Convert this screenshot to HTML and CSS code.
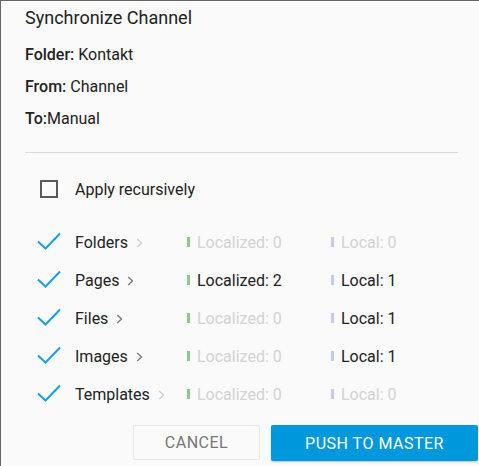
FILE: index.html
```html
<!DOCTYPE html>
<html>
<head>
<meta charset="utf-8">
<link rel="stylesheet" href="styles.css">
</head>
<body>
<div class="dialog">
  <h1 class="title">Synchronize Channel</h1>
  <div class="info"><b>Folder:</b> Kontakt</div>
  <div class="info"><b>From:</b> Channel</div>
  <div class="info"><b>To:</b>Manual</div>
  <hr class="divider">
  <div class="recursive">
    <span class="box"></span>
    <span class="rec-label">Apply recursively</span>
  </div>
  <div class="rows">
    <div class="row">
      <span class="check"><svg width="24" height="20" viewBox="0 0 24 20"><path d="M1 10.5 L8.5 17.5 L23 2.5" fill="none" stroke="#1b9fe2" stroke-width="2"/></svg></span>
      <span class="name">Folders<svg class="chev dim" width="7" height="10" viewBox="0 0 7 10"><path d="M1.2 1 L5.5 5 L1.2 9" fill="none" stroke-width="1.4"/></svg></span>
      <span class="stat"><i class="bar green"></i><span class="dimtext">Localized: 0</span></span>
      <span class="stat"><i class="bar lav"></i><span class="dimtext">Local: 0</span></span>
    </div>
    <div class="row">
      <span class="check"><svg width="24" height="20" viewBox="0 0 24 20"><path d="M1 10.5 L8.5 17.5 L23 2.5" fill="none" stroke="#1b9fe2" stroke-width="2"/></svg></span>
      <span class="name">Pages<svg class="chev" width="7" height="10" viewBox="0 0 7 10"><path d="M1.2 1 L5.5 5 L1.2 9" fill="none" stroke-width="1.4"/></svg></span>
      <span class="stat"><i class="bar green"></i><span>Localized: 2</span></span>
      <span class="stat"><i class="bar lav"></i><span>Local: 1</span></span>
    </div>
    <div class="row">
      <span class="check"><svg width="24" height="20" viewBox="0 0 24 20"><path d="M1 10.5 L8.5 17.5 L23 2.5" fill="none" stroke="#1b9fe2" stroke-width="2"/></svg></span>
      <span class="name">Files<svg class="chev" width="7" height="10" viewBox="0 0 7 10"><path d="M1.2 1 L5.5 5 L1.2 9" fill="none" stroke-width="1.4"/></svg></span>
      <span class="stat"><i class="bar green"></i><span class="dimtext">Localized: 0</span></span>
      <span class="stat"><i class="bar lav"></i><span>Local: 1</span></span>
    </div>
    <div class="row">
      <span class="check"><svg width="24" height="20" viewBox="0 0 24 20"><path d="M1 10.5 L8.5 17.5 L23 2.5" fill="none" stroke="#1b9fe2" stroke-width="2"/></svg></span>
      <span class="name">Images<svg class="chev" width="7" height="10" viewBox="0 0 7 10"><path d="M1.2 1 L5.5 5 L1.2 9" fill="none" stroke-width="1.4"/></svg></span>
      <span class="stat"><i class="bar green"></i><span class="dimtext">Localized: 0</span></span>
      <span class="stat"><i class="bar lav"></i><span>Local: 1</span></span>
    </div>
    <div class="row">
      <span class="check"><svg width="24" height="20" viewBox="0 0 24 20"><path d="M1 10.5 L8.5 17.5 L23 2.5" fill="none" stroke="#1b9fe2" stroke-width="2"/></svg></span>
      <span class="name">Templates<svg class="chev dim" width="7" height="10" viewBox="0 0 7 10"><path d="M1.2 1 L5.5 5 L1.2 9" fill="none" stroke-width="1.4"/></svg></span>
      <span class="stat"><i class="bar green"></i><span class="dimtext">Localized: 0</span></span>
      <span class="stat"><i class="bar lav"></i><span class="dimtext">Local: 0</span></span>
    </div>
  </div>
  <div class="actions">
    <button class="btn cancel">CANCEL</button>
    <button class="btn push">PUSH TO MASTER</button>
  </div>
</div>
</body>
</html>
```
FILE: styles.css
```css
html, body {
  margin: 0;
  padding: 0;
  background: #666;
  height: 466px;
  overflow: hidden;
}
body {
  padding: 1px 0 0 1px;
  box-sizing: border-box;
  font-family: Roboto, "Noto Sans", sans-serif;
  color: #222;
}
.dialog {
  background: #fafafa;
  height: 465px;
  padding: 0 0 0 24px;
  box-sizing: border-box;
  overflow: hidden;
}
.title {
  margin: 0;
  padding-top: 5px;
  font-size: 18px;
  font-weight: 400;
  line-height: 24px;
  color: #222;
}
.info {
  font-size: 16px;
  line-height: 20px;
  margin-top: 15px;
}
.info + .info {
  margin-top: 12px;
}
.info b {
  font-weight: 500;
}
.divider {
  border: 0;
  border-top: 1px solid #dcdcdc;
  margin: 23px 21px 0 0;
}
.recursive {
  display: flex;
  align-items: center;
  height: 20px;
  margin-top: 26px;
  font-size: 16px;
}
.box {
  width: 14px;
  height: 14px;
  border: 2px solid #5a5a5a;
  margin-left: 15px;
  margin-right: 17px;
}
.rows {
  margin-top: 33px;
}
.row {
  display: flex;
  align-items: center;
  height: 20px;
  margin-bottom: 18px;
  font-size: 16px;
}
.check {
  width: 50px;
  display: flex;
  padding-left: 12px;
  box-sizing: border-box;
}
.check svg {
  display: block;
  margin-top: -2px;
}
.name {
  width: 112px;
  display: flex;
  align-items: center;
}
.chev {
  margin-left: 8px;
  margin-top: 1px;
  stroke: #7a7a7a;
}
.chev.dim {
  stroke: #cfcfcf;
}
.stat {
  display: flex;
  align-items: center;
  width: 144px;
}
.bar {
  display: inline-block;
  width: 3px;
  height: 10px;
  margin-right: 7px;
}
.green { background: #8cc98c; }
.lav { background: #c5c8f5; }
.dimtext { color: #d2d2d2; }
.actions {
  display: flex;
  justify-content: flex-end;
  gap: 11px;
  margin-top: 21px;
  padding-right: 1px;
}
.btn {
  font-family: Roboto, "Noto Sans", sans-serif;
  font-size: 16px;
  letter-spacing: 0.5px;
  border-radius: 2px;
  cursor: pointer;
}
.cancel {
  width: 127px;
  height: 35px;
  background: #fafafa;
  border: 1px solid #e8e8e8;
  color: #777;
}
.push {
  width: 207px;
  height: 36px;
  background: #0098dc;
  border: 0;
  color: #fff;
  box-shadow: 0 1px 2px rgba(0,0,0,0.25);
}
```
